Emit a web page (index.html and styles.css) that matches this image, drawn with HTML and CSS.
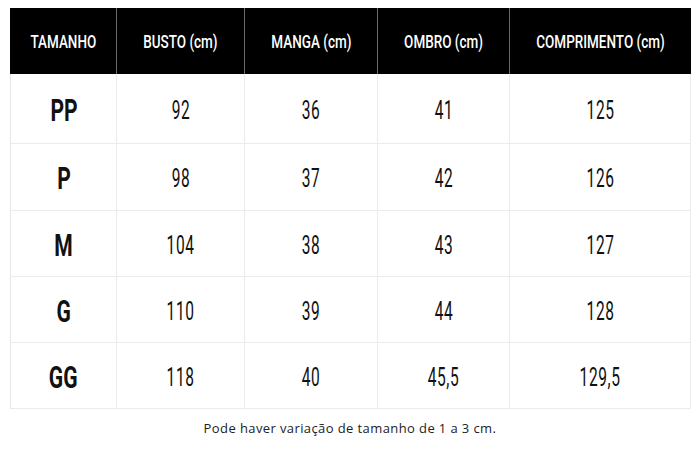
FILE: index.html
```html
<!DOCTYPE html>
<html lang="pt">
<head>
<meta charset="utf-8">
<link rel="stylesheet" href="styles.css">
</head>
<body>
<div class="chart">
  <div class="grid">
    <div class="hd"><span>TAMANHO</span></div>
    <div class="hd"><span>BUSTO (cm)</span></div>
    <div class="hd"><span>MANGA (cm)</span></div>
    <div class="hd"><span>OMBRO (cm)</span></div>
    <div class="hd"><span>COMPRIMENTO (cm)</span></div>

    <div class="cell size"><span>PP</span></div>
    <div class="cell"><span>92</span></div>
    <div class="cell"><span>36</span></div>
    <div class="cell"><span>41</span></div>
    <div class="cell"><span>125</span></div>

    <div class="cell size"><span>P</span></div>
    <div class="cell"><span>98</span></div>
    <div class="cell"><span>37</span></div>
    <div class="cell"><span>42</span></div>
    <div class="cell"><span>126</span></div>

    <div class="cell size"><span>M</span></div>
    <div class="cell"><span>104</span></div>
    <div class="cell"><span>38</span></div>
    <div class="cell"><span>43</span></div>
    <div class="cell"><span>127</span></div>

    <div class="cell size"><span>G</span></div>
    <div class="cell"><span>110</span></div>
    <div class="cell"><span>39</span></div>
    <div class="cell"><span>44</span></div>
    <div class="cell"><span>128</span></div>

    <div class="cell size"><span>GG</span></div>
    <div class="cell"><span>118</span></div>
    <div class="cell"><span>40</span></div>
    <div class="cell"><span>45,5</span></div>
    <div class="cell"><span>129,5</span></div>
  </div>
  <p class="note">Pode haver variação de tamanho de 1 a 3 cm.</p>
</div>
</body>
</html>
```
FILE: styles.css
```css
html, body {
  margin: 0;
  padding: 0;
  background: #ffffff;
}
.chart {
  width: 700px;
  height: 451px;
  padding: 8px 0 0 10px;
  box-sizing: border-box;
}
.grid {
  display: grid;
  grid-template-columns: 106px 128px 133px 132px 181px;
  grid-template-rows: 66px 70px 67px 66px 66px 66px;
  width: 680px;
  border-left: 1px solid #e6e6e6;
  box-sizing: border-box;
}
.hd, .cell {
  display: flex;
  align-items: center;
  justify-content: center;
  box-sizing: border-box;
  font-family: "Roboto", "DejaVu Sans", sans-serif;
}
.hd span, .cell span {
  display: inline-block;
  white-space: nowrap;
}
.hd {
  background: #000;
  color: #fff;
  border-right: 1px solid #6a6a6a;
  font-size: 19px;
  font-weight: 500;
}
.hd:first-child {
  margin-left: -1px;
}
.hd:nth-child(5) {
  border-right: none;
}
.hd span {
  transform: scaleX(0.71);
}
.cell {
  border-right: 1px solid #ebebeb;
  border-bottom: 1px solid #ebebeb;
  color: #111;
  font-size: 25px;
  font-weight: 400;
  padding-top: 3px;
}
.cell span {
  transform: scaleX(0.62);
  letter-spacing: 1px;
  margin-right: -1px;
}
.cell.size {
  font-size: 31px;
  font-weight: 700;
}
.cell.size span {
  transform: scaleX(0.68);
  letter-spacing: 0;
  margin-right: 0;
}
.note {
  margin: 10px 0 0 0;
  width: 680px;
  text-align: center;
  font-family: "Open Sans", "DejaVu Sans", sans-serif;
  font-size: 13px;
  color: #222;
  letter-spacing: 0.4px;
}
```
